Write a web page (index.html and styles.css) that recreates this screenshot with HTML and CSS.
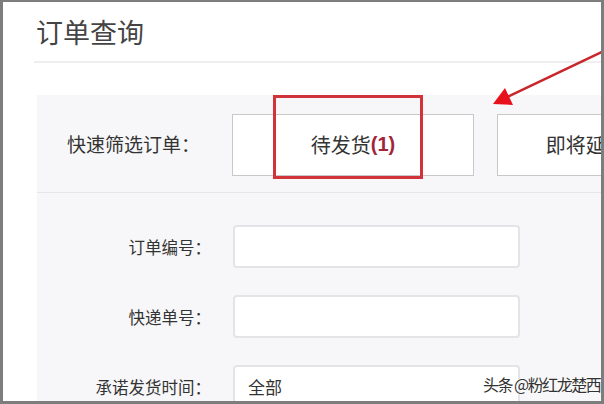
FILE: index.html
```html
<!DOCTYPE html>
<html lang="zh-CN">
<head>
  <meta charset="UTF-8">
  <title>订单查询</title>
  <link rel="stylesheet" href="styles.css">
</head>
<body>
  <div class="moldura">
    <div class="pagina">
      <h1 class="titulo">订单查询</h1>

      <div class="painel">
        <div class="filtro">
          <div class="filtro-rotulo">快速筛选订单：</div>
          <div class="botoes">
            <div class="botao">待发货<b>(1)</b></div>
            <div class="botao">即将延迟发货<b>(0)</b></div>
          </div>
        </div>

        <div class="form">
          <div class="linha">
            <label class="rotulo">订单编号：</label>
            <div class="campo"></div>
          </div>
          <div class="linha">
            <label class="rotulo">快递单号：</label>
            <div class="campo"></div>
          </div>
          <div class="linha">
            <label class="rotulo">承诺发货时间：</label>
            <div class="campo">全部</div>
          </div>
        </div>
      </div>
    </div>

    <!-- destaque vermelho sobre o primeiro botão -->
    <div class="destaque"></div>

    <svg class="seta" width="604" height="404" viewBox="0 0 604 404">
      <line x1="604" y1="51" x2="505" y2="98" stroke="#c9262c" stroke-width="2.5"/>
      <polygon points="493,104 505,88 513,105" fill="#e8101a"/>
    </svg>

    <div class="marca">头条 @粉红龙楚西</div>
  </div>
</body>
</html>
```

FILE: styles.css
```css
body {
  margin: 0;
  font-family: "Noto Sans CJK SC", "Noto Sans", sans-serif;
  color: #333;
}

.moldura {
  position: relative;
  width: 604px;
  height: 404px;
  box-sizing: border-box;
  border: 3px solid #7d7d7d;
  border-top-width: 2px;
  background: #fff;
  overflow: hidden;
}

.pagina {
  padding-left: 31px;
}

.titulo {
  margin: 0;
  padding: 10px 0 0 2px;
  height: 49px;
  font-size: 27px;
  font-weight: normal;
  line-height: 40px;
  color: #444;
  border-bottom: 2px solid #eeeeee;
}

.painel {
  margin-top: 32px;
  margin-left: 3px;
  background: #f7f7f9;
  height: 320px;
}

.filtro {
  display: flex;
  align-items: center;
  height: 97px;
  border-bottom: 1px solid #e6e6e9;
}

.filtro-rotulo {
  flex: none;
  width: 195px;
  padding-left: 30px;
  box-sizing: border-box;
  font-size: 19px;
  white-space: nowrap;
}

.botoes {
  display: flex;
  gap: 23px;
  padding-top: 2px;
}

.botao {
  flex: none;
  width: 242px;
  height: 62px;
  box-sizing: border-box;
  border: 1px solid #c8c8c8;
  background: #fff;
  display: flex;
  align-items: center;
  justify-content: center;
  font-size: 20px;
  white-space: nowrap;
}

.botao b {
  color: #a0263a;
  font-family: "Liberation Sans", sans-serif;
  font-weight: bold;
}

.form {
  padding-top: 32px;
  display: flex;
  flex-direction: column;
  gap: 27px;
}

.linha {
  display: flex;
  align-items: center;
  gap: 22px;
}

.rotulo {
  flex: none;
  width: 174px;
  text-align: right;
  font-size: 16.5px;
  white-space: nowrap;
}

.campo {
  flex: none;
  width: 287px;
  height: 43px;
  box-sizing: border-box;
  border: 2px solid #e4e4e6;
  border-radius: 4px;
  background: #fff;
  padding-left: 13px;
  font-size: 17px;
  line-height: 39px;
}

.destaque {
  position: absolute;
  left: 270px;
  top: 93px;
  width: 150px;
  height: 84px;
  border: 3px solid #d2333a;
  box-sizing: border-box;
}

.seta {
  position: absolute;
  left: -3px;
  top: -2px;
}

.marca {
  position: absolute;
  left: 480px;
  top: 370px;
  font-size: 16px;
  letter-spacing: -1.5px;
  color: #333;
  white-space: nowrap;
  text-shadow: 0 0 2px #fff, 0 0 2px #fff;
}
```
